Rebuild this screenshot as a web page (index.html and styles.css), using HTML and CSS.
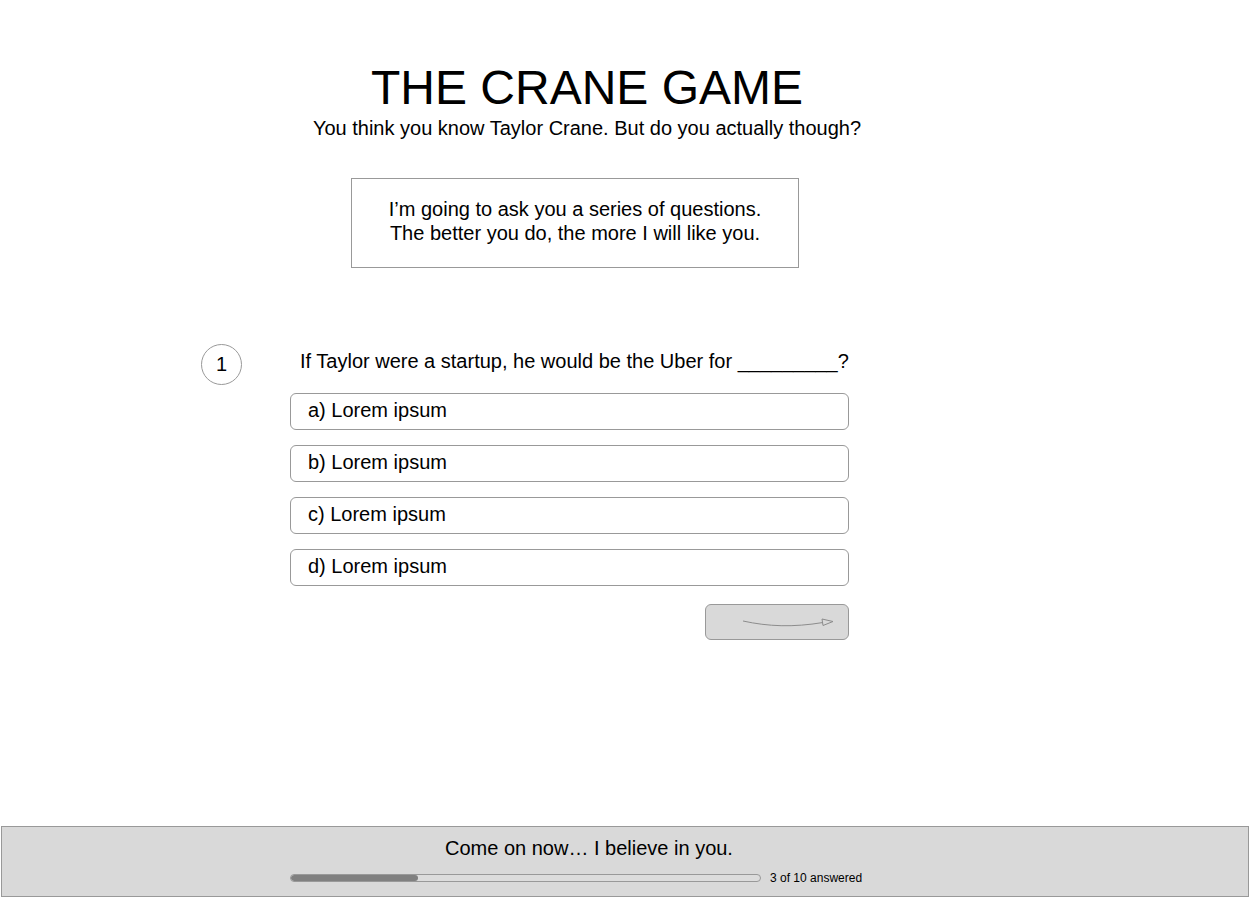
FILE: index.html
```html
<!DOCTYPE html>
<html lang="en">
<head>
<meta charset="utf-8">
<title>The Crane Game</title>
<link rel="stylesheet" href="styles.css">
</head>
<body>
<div class="page">
  <header class="header">
    <h1 class="title">THE CRANE GAME</h1>
    <p class="subtitle">You think you know Taylor Crane. But do you actually though?</p>
  </header>

  <section class="intro">
    <p>I’m going to ask you a series of questions.</p>
    <p>The better you do, the more I will like you.</p>
  </section>

  <section class="question">
    <div class="num">1</div>
    <div class="qbody">
      <p class="qtext">If Taylor were a startup, he would be the Uber for _________?</p>
      <div class="options">
        <div class="option">a) Lorem ipsum</div>
        <div class="option">b) Lorem ipsum</div>
        <div class="option">c) Lorem ipsum</div>
        <div class="option">d) Lorem ipsum</div>
      </div>
      <div class="actions">
        <button class="next" type="button" aria-label="Next">
          <svg width="92" height="12" viewBox="0 0 92 12" aria-hidden="true">
            <path d="M0 3 C 25 8.5, 50 9.5, 80 4.5" fill="none" stroke="#8c8c8c" stroke-width="1"/>
            <path d="M79 1 L90 3.5 L80 7.5 Z" fill="none" stroke="#8c8c8c" stroke-width="1" stroke-linejoin="round"/>
          </svg>
        </button>
      </div>
    </div>
  </section>

  <footer class="footer">
    <div class="footer-inner">
      <p class="message">Come on now… I believe in you.</p>
      <div class="progress-row">
        <div class="progress"><div class="progress-fill" style="width: 27%"></div></div>
        <span class="progress-label">3 of 10 answered</span>
      </div>
    </div>
  </footer>
</div>
</body>
</html>
```

FILE: styles.css
```css
* { box-sizing: border-box; }

html, body {
  margin: 0;
  padding: 0;
  background: #fff;
}

body {
  font-family: "Liberation Sans", Arial, Helvetica, sans-serif;
  color: #000;
}

p { margin: 0; }

.page {
  height: 898px;
  display: flex;
  flex-direction: column;
  overflow: hidden;
}

.header {
  width: 1174px;
  padding-top: 60px;
  text-align: center;
}

.title {
  margin: 0;
  font-size: 48px;
  font-weight: normal;
  line-height: 56px;
}

.subtitle {
  font-size: 20px;
  line-height: 24px;
}

.intro {
  margin: 38px 0 0 351px;
  width: 448px;
  height: 90px;
  border: 1px solid #999;
  padding-top: 18px;
  text-align: center;
  font-size: 20px;
  line-height: 24px;
}

.question {
  display: flex;
  margin: 76px 0 0 201px;
}

.num {
  width: 41px;
  height: 41px;
  border: 1px solid #999;
  border-radius: 50%;
  display: flex;
  align-items: center;
  justify-content: center;
  font-size: 20px;
  flex: none;
}

.qbody {
  margin-left: 48px;
  width: 559px;
}

.qtext {
  margin-top: 5px;
  padding-left: 10px;
  font-size: 20px;
  line-height: 24px;
}

.options {
  margin-top: 20px;
  display: flex;
  flex-direction: column;
  gap: 15px;
}

.option {
  height: 37px;
  border: 1px solid #999;
  border-radius: 6px;
  padding-left: 17px;
  font-size: 20px;
  line-height: 33px;
}

.actions {
  display: flex;
  justify-content: flex-end;
  margin-top: 18px;
}

.next {
  width: 144px;
  height: 36px;
  background: #d9d9d9;
  border: 1px solid #999;
  border-radius: 6px;
  padding: 3px 0 0 37px;
  display: flex;
  align-items: center;
  justify-content: flex-start;
}

.next svg { display: block; }

.footer {
  margin: auto 1px 1px 1px;
  height: 71px;
  background: #d9d9d9;
  border: 1px solid #999;
}

.footer-inner {
  margin-left: 288px;
  padding-top: 9px;
}

.message {
  padding-left: 155px;
  font-size: 20px;
  line-height: 24px;
}

.progress-row {
  display: flex;
  align-items: center;
  margin-top: 11px;
  height: 14px;
}

.progress {
  width: 471px;
  height: 8px;
  border: 1px solid #999;
  border-radius: 4px;
  background: #dcdcdc;
  overflow: hidden;
}

.progress-fill {
  height: 100%;
  background: #808080;
  border-radius: 4px;
}

.progress-label {
  margin-left: 9px;
  font-size: 12px;
  line-height: 14px;
}
```
